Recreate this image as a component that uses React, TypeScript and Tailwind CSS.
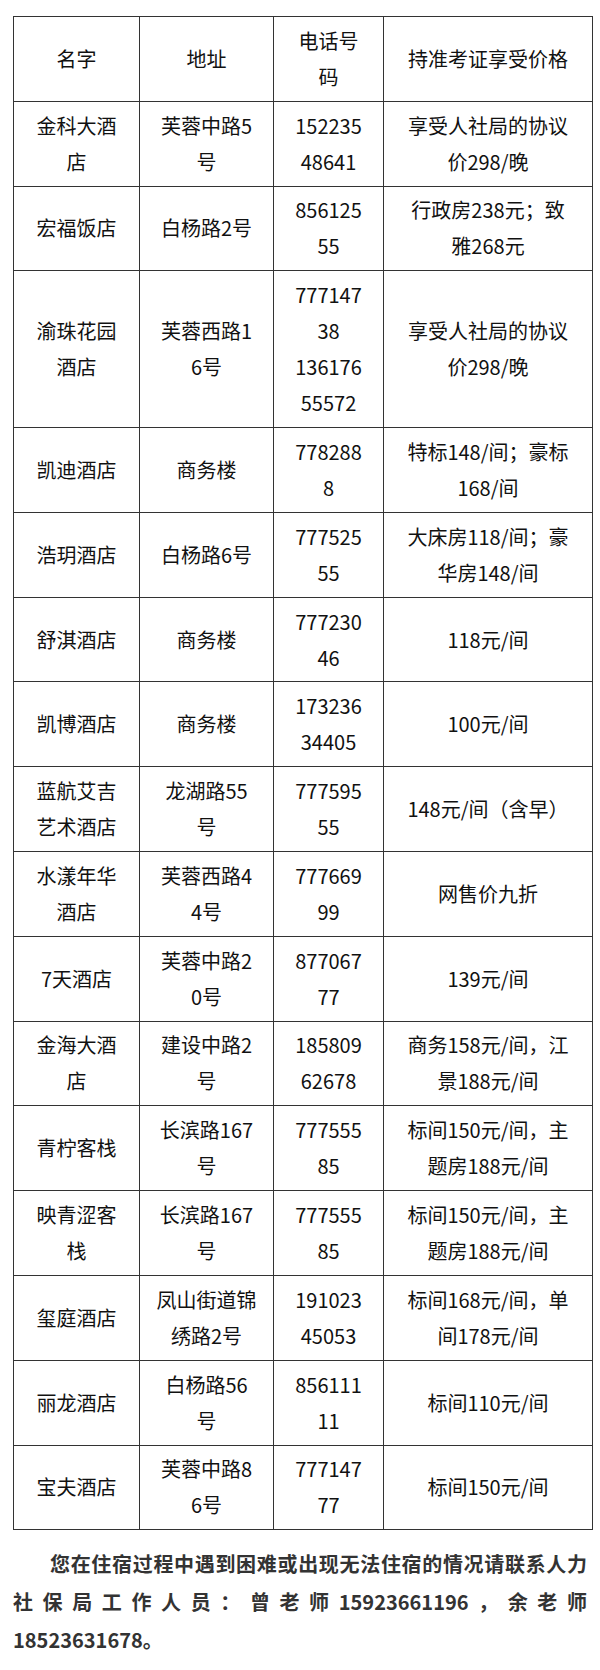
type Row = { name: string[]; addr: string[]; phone: string[]; price: string[] };

const rows: Row[] = [
  { name: ["金科大酒", "店"], addr: ["芙蓉中路5", "号"], phone: ["152235", "48641"], price: ["享受人社局的协议", "价298/晚"] },
  { name: ["宏福饭店"], addr: ["白杨路2号"], phone: ["856125", "55"], price: ["行政房238元；致", "雅268元"] },
  { name: ["渝珠花园", "酒店"], addr: ["芙蓉西路1", "6号"], phone: ["777147", "38", "136176", "55572"], price: ["享受人社局的协议", "价298/晚"] },
  { name: ["凯迪酒店"], addr: ["商务楼"], phone: ["778288", "8"], price: ["特标148/间；豪标", "168/间"] },
  { name: ["浩玥酒店"], addr: ["白杨路6号"], phone: ["777525", "55"], price: ["大床房118/间；豪", "华房148/间"] },
  { name: ["舒淇酒店"], addr: ["商务楼"], phone: ["777230", "46"], price: ["118元/间"] },
  { name: ["凯博酒店"], addr: ["商务楼"], phone: ["173236", "34405"], price: ["100元/间"] },
  { name: ["蓝航艾吉", "艺术酒店"], addr: ["龙湖路55", "号"], phone: ["777595", "55"], price: ["148元/间（含早）"] },
  { name: ["水漾年华", "酒店"], addr: ["芙蓉西路4", "4号"], phone: ["777669", "99"], price: ["网售价九折"] },
  { name: ["7天酒店"], addr: ["芙蓉中路2", "0号"], phone: ["877067", "77"], price: ["139元/间"] },
  { name: ["金海大酒", "店"], addr: ["建设中路2", "号"], phone: ["185809", "62678"], price: ["商务158元/间，江", "景188元/间"] },
  { name: ["青柠客栈"], addr: ["长滨路167", "号"], phone: ["777555", "85"], price: ["标间150元/间，主", "题房188元/间"] },
  { name: ["映青涩客", "栈"], addr: ["长滨路167", "号"], phone: ["777555", "85"], price: ["标间150元/间，主", "题房188元/间"] },
  { name: ["玺庭酒店"], addr: ["凤山街道锦", "绣路2号"], phone: ["191023", "45053"], price: ["标间168元/间，单", "间178元/间"] },
  { name: ["丽龙酒店"], addr: ["白杨路56", "号"], phone: ["856111", "11"], price: ["标间110元/间"] },
  { name: ["宝夫酒店"], addr: ["芙蓉中路8", "6号"], phone: ["777147", "77"], price: ["标间150元/间"] },
];

function Cell({ lines, head }: { lines: string[]; head?: boolean }) {
  const Tag = head ? "th" : "td";
  return (
    <Tag className="border border-[#333] px-0 py-[5.9px] text-center align-middle font-normal">
      {lines.map((l, i) => (
        <div key={i} className="whitespace-nowrap">{l}</div>
      ))}
    </Tag>
  );
}

export default function App() {
  return (
    <div className="min-h-[1670px] bg-white pt-[16px] text-[20px] leading-[36px] text-[#111] font-['Noto_Sans_CJK_SC',sans-serif]">
      <table className="ml-[13px] w-[579px] table-fixed border-collapse">
        <colgroup>
          <col className="w-[126px]" />
          <col className="w-[134px]" />
          <col className="w-[110px]" />
          <col className="w-[209px]" />
        </colgroup>
        <thead>
          <tr>
            <Cell head lines={["名字"]} />
            <Cell head lines={["地址"]} />
            <Cell head lines={["电话号", "码"]} />
            <Cell head lines={["持准考证享受价格"]} />
          </tr>
        </thead>
        <tbody>
          {rows.map((r, i) => (
            <tr key={i}>
              <Cell lines={r.name} />
              <Cell lines={r.addr} />
              <Cell lines={r.phone} />
              <Cell lines={r.price} />
            </tr>
          ))}
        </tbody>
      </table>

      {/* note below the table */}
      <div className="mx-[13px] mt-[15px] text-[20px] leading-[38px] font-bold text-[#333]">
        <div className="whitespace-nowrap indent-[37px] [text-align-last:justify]">
          您在住宿过程中遇到困难或出现无法住宿的情况请联系人力
        </div>
        <div className="whitespace-nowrap [text-align-last:justify]">
          社保局工作人员：曾老师15923661196，余老师
        </div>
        <div>18523631678。</div>
      </div>
    </div>
  );
}
